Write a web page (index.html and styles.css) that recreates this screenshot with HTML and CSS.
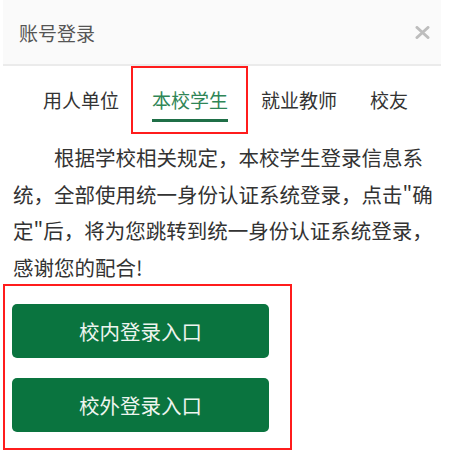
FILE: index.html
```html
<!DOCTYPE html>
<html lang="zh-CN">
<head>
    <meta charset="UTF-8">
    <meta name="viewport" content="width=device-width, initial-scale=1.0">
    <title>账号登录</title>
    <link rel="stylesheet" href="styles.css">
</head>
<body>
    <div class="dialog">
        <div class="dialog-head">
            <h1>账号登录</h1>
            <span class="close">
                <svg width="15" height="13" viewBox="0 0 15 13">
                    <path d="M2 1.5 L13 11.5 M13 1.5 L2 11.5" stroke="#bdbdbd" stroke-width="3" stroke-linecap="round"/>
                </svg>
            </span>
        </div>
        <div class="tabs">
            <span class="tab">用人单位</span>
            <span class="tab active">本校学生<span class="mark"></span></span>
            <span class="tab">就业教师</span>
            <span class="tab">校友</span>
        </div>
        <p class="notice">根据学校相关规定，本校学生登录信息系统，全部使用统一身份认证系统登录，点击"确定"后，将为您跳转到统一身份认证系统登录，感谢您的配合!</p>
        <div class="entries">
            <button class="entry">校内登录入口</button>
            <button class="entry">校外登录入口</button>
        </div>
    </div>
</body>
</html>
```

FILE: styles.css
```css
body {
    margin: 0;
    padding: 0;
    background: #fff;
    font-family: "Noto Sans CJK SC", "Noto Sans", sans-serif;
}
.dialog {
    margin-left: 3px;
    width: 438px;
}
.dialog-head {
    height: 64px;
    background: #fafafa;
    border-bottom: 2px solid #ebebeb;
    display: flex;
    align-items: center;
    justify-content: space-between;
    padding: 0 11px 0 16px;
}
.dialog-head h1 {
    margin: 0;
    font-size: 19px;
    font-weight: normal;
    color: #555;
    line-height: 28px;
    margin-top: 1px;
}
.close {
    display: flex;
    margin-top: 1px;
}
.tabs {
    display: flex;
    gap: 33px;
    padding-left: 40px;
}
.tab {
    position: relative;
    font-size: 19px;
    line-height: 28px;
    color: #333;
    padding: 20px 0 5px;
    border-bottom: 3px solid transparent;
}
.tab.active {
    color: #2f8657;
    border-bottom-color: #1f6f47;
}
.mark {
    position: absolute;
    left: -21px;
    right: -20px;
    top: 0;
    bottom: -15px;
    border: 2px solid #ff1c1c;
}
.notice {
    margin: 17px 0 0;
    padding: 0 4px 0 10px;
    font-size: 20.5px;
    line-height: 36.5px;
    text-indent: 2em;
    color: #333;
}
.entries {
    width: 257px;
    margin-top: -1px;
    padding: 18px 21px 16px 7px;
    border: 2px solid #ff1c1c;
    display: flex;
    flex-direction: column;
    gap: 20px;
}
.entry {
    height: 54px;
    border: none;
    border-radius: 5px;
    background: #0a743f;
    color: #eef5ef;
    font-family: "Noto Sans CJK SC", "Noto Sans", sans-serif;
    font-size: 20.5px;
    padding: 0;
}
```
